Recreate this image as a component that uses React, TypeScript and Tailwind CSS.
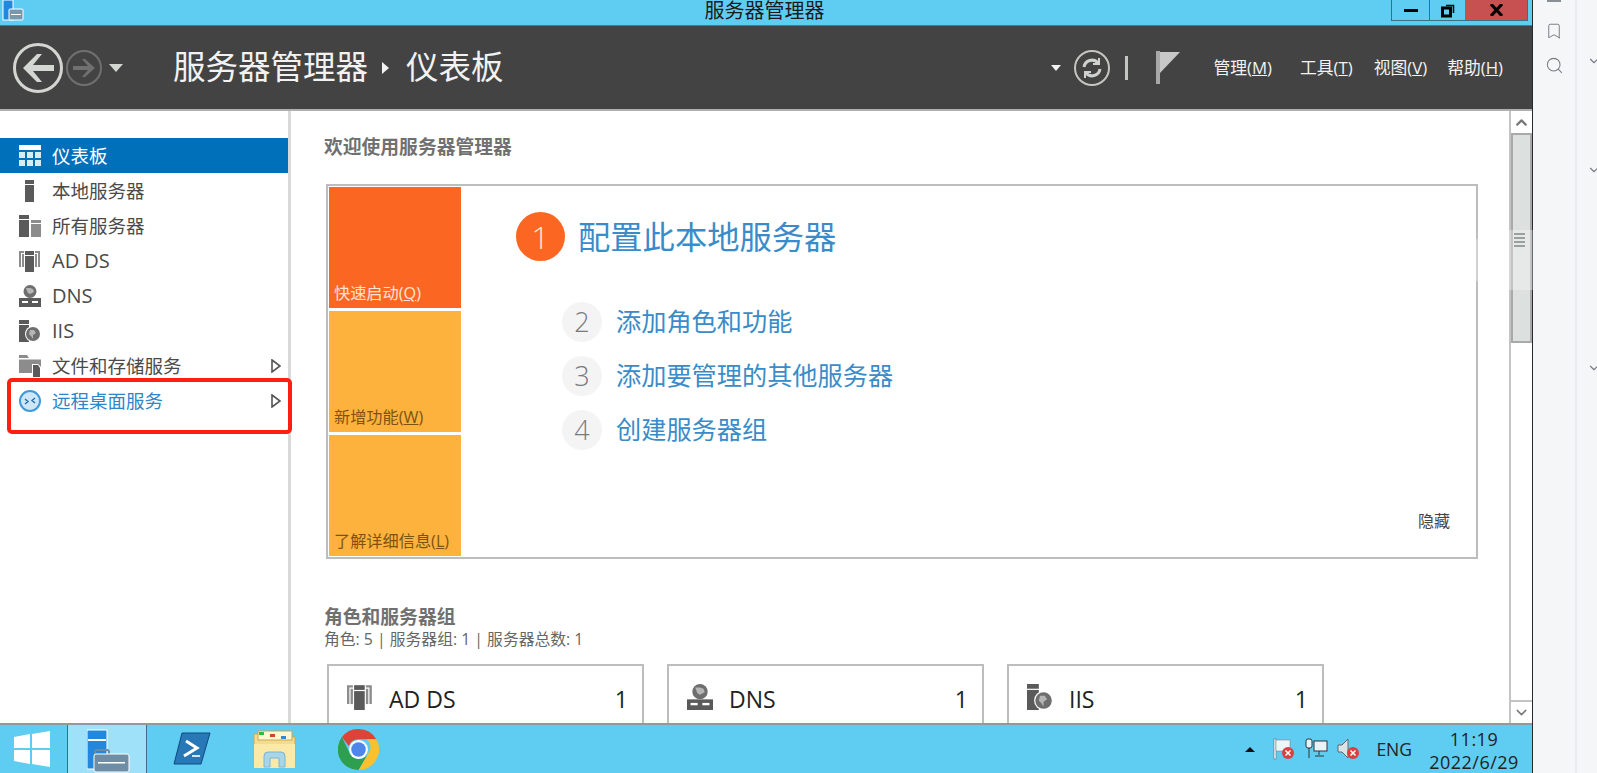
import React from "react";
import { Bookmark, ChevronDown, ChevronUp, Search, Settings } from "lucide-react";

const FONT = { fontFamily: '"Open Sans", "Noto Sans CJK SC", sans-serif' };

const DashIcon = () => (
  <svg width="22" height="22" viewBox="0 0 22 22" fill="#d6ecf8">
    <rect x="0" y="0" width="22" height="5" fill="#fff" />
    <rect x="0" y="7" width="6" height="6" />
    <rect x="8" y="7" width="6" height="6" />
    <rect x="16" y="7" width="6" height="6" />
    <rect x="0" y="15" width="6" height="6" />
    <rect x="8" y="15" width="6" height="6" />
    <rect x="16" y="15" width="6" height="6" />
  </svg>
);

const LocalIcon = () => (
  <svg width="22" height="22" viewBox="0 0 22 22" fill="#5a5a5a">
    <rect x="6" y="0" width="9" height="4" />
    <rect x="6" y="5" width="9" height="17" />
  </svg>
);

const AllIcon = () => (
  <svg width="22" height="22" viewBox="0 0 22 22">
    <rect x="0" y="0" width="10" height="4" fill="#5a5a5a" />
    <rect x="0" y="5" width="10" height="17" fill="#5a5a5a" />
    <rect x="12" y="5" width="10" height="3" fill="#8c8c8c" />
    <rect x="12" y="9" width="10" height="13" fill="#8c8c8c" />
  </svg>
);

const AdIcon = ({ size = 22 }: { size?: number }) => (
  <svg width={size} height={size} viewBox="0 0 22 22">
    <path d="M0 1h5v2H2v14H0zM21 1h-5v2h3v14h2z" fill="#8c8c8c" />
    <rect x="6" y="1" width="9" height="4" fill="#5a5a5a" />
    <rect x="6" y="6" width="9" height="16" fill="#5a5a5a" />
    <rect x="3" y="4" width="2" height="13" fill="#8c8c8c" />
    <rect x="16" y="4" width="2" height="13" fill="#8c8c8c" />
  </svg>
);

const DnsIcon = ({ size = 22 }: { size?: number }) => (
  <svg width={size} height={size} viewBox="0 0 22 22">
    <circle cx="11" cy="6.5" r="6.5" fill="#6e6e6e" />
    <path d="M7 3l4 0 3 1 1 3-4 2-2-1-1-2z" fill="#b5b5b5" />
    <rect x="0" y="13" width="22" height="9" fill="#5a5a5a" />
    <rect x="3" y="16" width="6" height="2" fill="#fff" />
    <rect x="13" y="16" width="6" height="2" fill="#fff" />
  </svg>
);

const IisIcon = ({ size = 22 }: { size?: number }) => (
  <svg width={size} height={size} viewBox="0 0 22 22">
    <rect x="0" y="0" width="10" height="4" fill="#5a5a5a" />
    <rect x="0" y="5" width="10" height="17" fill="#5a5a5a" />
    <circle cx="14" cy="14" r="8" fill="#fff" />
    <circle cx="14" cy="14" r="7" fill="#6e6e6e" />
    <path d="M11 10l4 0 2 3-3 2 0 4-2-3-2-2z" fill="#b5b5b5" />
  </svg>
);

const FilesIcon = () => (
  <svg width="22" height="22" viewBox="0 0 22 22">
    <path d="M0 0h8l2 3h12v15H0z" fill="#8c8c8c" />
    <rect x="0" y="3" width="22" height="1.5" fill="#fff" />
    <path d="M13 9h6l3 3v10h-9z" fill="#fff" />
    <path d="M14 10h5l2 3v9h-7z" fill="#5a5a5a" />
  </svg>
);

const RdsIcon = () => (
  <svg width="22" height="22" viewBox="0 0 22 22" fill="none">
    <circle cx="11" cy="11" r="10" fill="#cfe6f7" stroke="#3f9ad9" strokeWidth="2" />
    <path d="M6 9l3 2.5L6 14M16 8l-3 2.5 3 2.5" stroke="#1d6fb2" strokeWidth="1.4" />
  </svg>
);

const navItems: { label: string; icon: React.ReactNode; arrow?: boolean; latin?: boolean }[] = [
  { label: "本地服务器", icon: <LocalIcon /> },
  { label: "所有服务器", icon: <AllIcon /> },
  { label: "AD DS", icon: <AdIcon />, latin: true },
  { label: "DNS", icon: <DnsIcon />, latin: true },
  { label: "IIS", icon: <IisIcon />, latin: true },
  { label: "文件和存储服务", icon: <FilesIcon />, arrow: true },
];

const Arrow = () => (
  <svg width="10" height="14" viewBox="0 0 10 14" fill="#fff" stroke="#555" strokeWidth="1.6">
    <path d="M1 1l8 6-8 6z" />
  </svg>
);

const Sidebar = () => (
  <div className="relative w-[291px] shrink-0 border-r-[3px] border-[#d9d9d9] pt-[27px] text-[18.5px] text-[#4a4a4a]">
    <div className="flex h-[35px] items-center bg-[#0070bb] pl-[19px] text-white">
      <DashIcon />
      <span className="ml-[11px]">仪表板</span>
    </div>
    {navItems.map((item) => (
      <div key={item.label} className="flex h-[35px] items-center pl-[19px]">
        {item.icon}
        <span className={item.latin ? "ml-[11px] text-[20px]" : "ml-[11px]"}>{item.label}</span>
        {item.arrow && (
          <span className="ml-auto mr-[7px] flex">
            <Arrow />
          </span>
        )}
      </div>
    ))}
    <div className="flex h-[35px] items-center pl-[19px] text-[#2c86c9]">
      <RdsIcon />
      <span className="ml-[11px]">远程桌面服务</span>
      <span className="ml-auto mr-[7px] flex">
        <Arrow />
      </span>
    </div>
    <div className="absolute left-[7px] top-[267px] h-[56px] w-[285px] rounded-[5px] border-[4px] border-[#ff1f10]" />
  </div>
);

const Tile = ({ children, first }: { children: React.ReactNode; first?: boolean }) => (
  <div
    className={
      first
        ? "flex h-[121px] items-end bg-[#fb6723] pb-[3px] pl-[5px] text-[16.2px] text-[#fde3d3]"
        : "flex h-[121px] items-end bg-[#feb23e] pb-[3px] pl-[5px] text-[16.2px] text-[#7d5210]"
    }
  >
    <span>{children}</span>
  </div>
);

const Step = ({ n, label }: { n: number; label: string }) => (
  <div className="flex h-[40px] items-center">
    <div className="flex h-[40px] w-[40px] items-center justify-center rounded-full bg-[#f4f4f4] text-[27px] font-light text-[#7a7a7a]">
      {n}
    </div>
    <span className="ml-[14px] text-[25.2px] text-[#3a8cc9]">{label}</span>
  </div>
);

const Card = ({ icon, label }: { icon: React.ReactNode; label: string }) => (
  <div className="flex h-[120px] w-[317px] items-start border-2 border-[#bdbdbd] pl-[18px] pr-[14px] pt-[18px]">
    {icon}
    <span className="ml-[16px] mt-[2px] text-[23px] leading-[26px] text-[#222]">{label}</span>
    <span className="ml-auto mt-[2px] text-[23px] leading-[26px] text-[#222]">1</span>
  </div>
);

const Scrollbar = () => (
  <div className="flex w-[23px] shrink-0 flex-col border-l-2 border-[#c4c4c4] bg-white">
    <div className="flex h-[22px] items-center justify-center text-[#777]">
      <ChevronUp size={17} strokeWidth={3} />
    </div>
    <div className="h-[210px] border-2 border-[#a9a9a9] bg-[#dce0de]" />
    <div className="flex-1" />
    <div className="flex h-[23px] items-center justify-center border-t-2 border-[#c4c4c4] text-[#777]">
      <ChevronDown size={17} />
    </div>
  </div>
);

const Header = () => (
  <div className="flex h-[85px] shrink-0 items-center border-b-2 border-[#b0b0b0] bg-[#434343] text-[#f2f2f2]">
    <div className="ml-[13px] flex h-[50px] w-[50px] items-center justify-center rounded-full border-[3px] border-[#d4d6d2]">
      <svg width="34" height="30" viewBox="0 0 34 30" fill="#d4d6d2">
        <path d="M16 1l5 0-9 11h21v6H12l9 11h-5L2 15z" />
      </svg>
    </div>
    <div className="ml-[3px] flex h-[36px] w-[36px] items-center justify-center rounded-full border-2 border-[#707070]">
      <svg width="24" height="20" viewBox="0 0 24 20" fill="#707070">
        <path d="M13 1h-3l6 7H1v4h15l-6 7h3l10-9z" />
      </svg>
    </div>
    <div className="ml-[7px] h-0 w-0 border-x-[7px] border-t-[8px] border-x-transparent border-t-[#d4d6d2]" />
    <div className="ml-[50px] text-[32.5px] leading-none">服务器管理器</div>
    <div className="ml-[14px] h-0 w-0 border-y-[6px] border-l-[7px] border-y-transparent border-l-[#f2f2f2]" />
    <div className="ml-[17px] text-[32.5px] leading-none">仪表板</div>
    <div className="ml-auto h-0 w-0 border-x-[5px] border-t-[6px] border-x-transparent border-t-[#f2f2f2]" />
    <div className="ml-[13px] flex h-[36px] w-[36px] items-center justify-center rounded-full border-2 border-[#c4c6c2]">
      <svg width="24" height="24" viewBox="0 0 24 24" fill="none" stroke="#d0d2ce" strokeWidth="3">
        <path d="M4 11a8 8 0 0 1 14-4M20 13a8 8 0 0 1-14 4" />
        <path d="M19 2v6h-6M5 22v-6h6" strokeWidth="2" />
      </svg>
    </div>
    <div className="ml-[15px] h-[24px] w-[3px] bg-[#c4c6c2]" />
    <svg className="ml-[28px]" width="24" height="33" viewBox="0 0 24 33">
      <rect x="0" y="0" width="4" height="33" fill="#a8a8a8" />
      <path d="M4 1h20L4 22z" fill="#c8c8c8" />
    </svg>
    <div className="ml-[33px] flex text-[16.8px]">
      <span>
        管理(<u>M</u>)
      </span>
      <span className="ml-[28px]">
        工具(<u>T</u>)
      </span>
      <span className="ml-[21px]">
        视图(<u>V</u>)
      </span>
      <span className="ml-[20px]">
        帮助(<u>H</u>)
      </span>
    </div>
    <div className="w-[29px]" />
  </div>
);

const TitleBar = () => (
  <div className="relative flex h-[26px] shrink-0 items-start border-b border-[#3c7f99] bg-[#5fcdf2]">
    <svg className="ml-[1px]" width="23" height="21" viewBox="0 0 23 21">
      <rect x="2" y="0" width="10" height="20" fill="#2288dd" stroke="#fff" />
      <rect x="8" y="9" width="14" height="11" rx="1" fill="#7a98ad" stroke="#fff" />
      <rect x="10" y="14" width="10" height="1" fill="#fff" />
    </svg>
    <div className="flex-1 pl-[114px] text-center text-[20px] leading-[21px] text-[#1a1a1a]">服务器管理器</div>
    <div className="mr-[4px] flex h-[21px] border-x border-b border-[#3c6f85]">
      <div className="flex w-[38px] items-center justify-center border-r border-[#3c6f85]">
        <div className="h-[3px] w-[14px] bg-black" />
      </div>
      <div className="flex w-[35px] items-center justify-center">
        <svg width="14" height="15" viewBox="0 0 14 15" fill="none" stroke="#000">
          <rect x="1.5" y="5" width="8" height="8" strokeWidth="3" />
          <path d="M5 2.5h7.5V10" strokeWidth="1.5" />
        </svg>
      </div>
      <div className="flex w-[62px] items-center justify-center bg-[#c75050]">
        <svg width="13" height="12" viewBox="0 0 13 12" stroke="#000" strokeWidth="3" fill="none">
          <path d="M1 0l11 12M12 0L1 12" />
        </svg>
      </div>
    </div>
  </div>
);

const Taskbar = () => (
  <div className="flex h-[50px] shrink-0 items-center border-t-2 border-[#8f9a9f] bg-[#5fcdf2]">
    <svg className="ml-[14px]" width="36" height="36" viewBox="0 0 36 36" fill="#fff">
      <path d="M0 6l16-3v14H0zM18 3l18-3v17H18zM0 19h16v14L0 30zM18 19h18v17l-18-3z" />
    </svg>
    <div className="ml-[17px] flex h-full w-[80px] items-end justify-center border-x border-[#3a6e85] bg-[#9ee1f8] pl-[4px]">
      <svg width="44" height="44" viewBox="0 0 44 44">
        <rect x="0" y="1" width="20" height="39" fill="#2288dd" stroke="#fff" />
        <rect x="1" y="10" width="18" height="2" fill="#fff" />
        <rect x="8" y="21" width="14" height="6" rx="2" fill="none" stroke="#6a8ba0" strokeWidth="2" />
        <rect x="7" y="25" width="35" height="18" rx="2" fill="#6f8ea5" stroke="#fff" />
        <rect x="11" y="33" width="27" height="1.5" fill="#fff" />
      </svg>
    </div>
    <svg className="ml-[26px]" width="38" height="34" viewBox="0 0 38 34">
      <path d="M9 1h28L28 32H1z" fill="#2878b8" stroke="#0e4a7c" />
      <path d="M13 9l11 7-13 8" fill="none" stroke="#fff" strokeWidth="3" />
      <rect x="19" y="23" width="8" height="2" fill="#d5e7f5" />
    </svg>
    <svg className="ml-[42px]" width="44" height="40" viewBox="0 0 44 40">
      <path d="M1 5h18l3 3h20v29H1z" fill="#f3dc8e" stroke="#c8a853" />
      <rect x="5" y="2" width="34" height="9" fill="#fff6d2" stroke="#c8a853" />
      <rect x="6" y="3" width="5" height="3" fill="#25c13f" />
      <rect x="17" y="5" width="5" height="3" fill="#d9402a" />
      <rect x="28" y="7" width="5" height="3" fill="#2a8be0" />
      <path d="M1 15h41v24H1z" fill="#fbe9a8" />
      <path d="M11 38V27a4 4 0 0 1 4-4h13a4 4 0 0 1 4 4v11h-6v-9h-9v9z" fill="#a7d5ea" stroke="#7bb6d2" />
    </svg>
    <svg className="ml-[41px]" width="41" height="41" viewBox="0 0 48 48">
      <path d="M24 0a24 24 0 0 1 20.8 12H24a12 12 0 0 0-11.4 8L4.6 9.5A24 24 0 0 1 24 0z" fill="#db4437" />
      <path d="M44.8 12A24 24 0 0 1 24 48l10.4-18a12 12 0 0 0-.8-18z" fill="#fbc02d" />
      <path d="M24 48A24 24 0 0 1 4.6 9.5L14.6 30A12 12 0 0 0 34.4 30z" fill="#2e9e4f" />
      <circle cx="24" cy="24" r="11" fill="#fff" />
      <circle cx="24" cy="24" r="8.5" fill="#4e86ec" />
    </svg>
    <div className="ml-auto h-0 w-0 border-x-[5px] border-b-[5px] border-x-transparent border-b-[#111]" />
    <svg className="ml-[18px]" width="22" height="22" viewBox="0 0 22 22">
      <rect x="1" y="1" width="2" height="20" fill="#fff" stroke="#555" strokeWidth="0.5" />
      <path d="M3 2h14v11H3z" fill="#ecf5f8" stroke="#777" strokeWidth="0.5" />
      <circle cx="15" cy="15" r="6" fill="#d94040" />
      <path d="M12.5 12.5l5 5m0-5l-5 5" stroke="#fff" strokeWidth="1.5" />
    </svg>
    <svg className="ml-[10px]" width="23" height="22" viewBox="0 0 23 22" fill="none" stroke="#333">
      <rect x="1" y="1" width="6" height="9" rx="2" fill="#e6f4f8" />
      <rect x="9" y="3" width="13" height="10" fill="#e6f4f8" />
      <path d="M4 10v10M14 13v4M10 18h9" />
    </svg>
    <svg className="ml-[9px]" width="23" height="22" viewBox="0 0 23 22">
      <path d="M1 7h4l6-6v19l-6-6H1z" fill="#d9e4e8" stroke="#666" />
      <circle cx="16" cy="15" r="6" fill="#d94040" />
      <path d="M13.5 12.5l5 5m0-5l-5 5" stroke="#fff" strokeWidth="1.5" />
    </svg>
    <div className="ml-[16px] text-[17.5px] text-[#222]">ENG</div>
    <div className="ml-[12px] mr-[8px] w-[100px] pt-[3px] text-center text-[18px] leading-[23px] tracking-[0.5px] text-[#222]">
      <div>11:19</div>
      <div>2022/6/29</div>
    </div>
  </div>
);

const SidePanel = () => (
  <div className="flex flex-1 overflow-hidden bg-[#f5f6f8] text-[#777c85]">
    <div className="flex w-[44px] shrink-0 flex-col items-center border-r-2 border-[#e9ebef]">
      <div className="h-[2px] w-[14px] bg-[#8a8f96]" />
      <Bookmark className="mt-[20px]" size={18} strokeWidth={1.3} />
      <Search className="mt-[16px]" size={19} strokeWidth={1.3} />
    </div>
    <div className="flex flex-col pl-[10px] pt-[54px]">
      <ChevronDown size={14} />
      <ChevronDown className="mt-[95px]" size={14} />
      <ChevronDown className="mt-[184px]" size={14} />
    </div>
  </div>
);

export default function App() {
  return (
    <div className="relative flex h-[773px] w-[1597px] overflow-hidden bg-white" style={FONT}>
      <div className="flex w-[1533px] shrink-0 flex-col border-r border-[#2a2a2a]">
        <TitleBar />
        <Header />
        <div className="flex min-h-0 flex-1">
          <Sidebar />
          <div className="min-w-0 flex-1 overflow-hidden pl-[33px] pt-[26px]">
            <div className="text-[18.8px] font-bold leading-[20px] text-[#707070]">欢迎使用服务器管理器</div>
            <div className="ml-[2px] mt-[27px] flex h-[375px] w-[1152px] border-2 border-[#bdbdbd] p-px">
              <div className="flex w-[132px] shrink-0 flex-col gap-[3px]">
                <Tile first>
                  快速启动(<u>Q</u>)
                </Tile>
                <Tile>
                  新增功能(<u>W</u>)
                </Tile>
                <Tile>
                  了解详细信息(<u>L</u>)
                </Tile>
              </div>
              <div className="flex min-w-0 flex-1 flex-col pl-[55px] pt-[25px]">
                <div className="flex h-[49px] items-center">
                  <div className="flex h-[49px] w-[49px] items-center justify-center rounded-full bg-[#fb6723] text-[32px] font-light text-[#fde3d3]">
                    1
                  </div>
                  <span className="ml-[13px] text-[32.3px] text-[#3a8cc9]">配置此本地服务器</span>
                </div>
                <div className="ml-[46px] mt-[41px] flex flex-col gap-[14px]">
                  <Step n={2} label="添加角色和功能" />
                  <Step n={3} label="添加要管理的其他服务器" />
                  <Step n={4} label="创建服务器组" />
                </div>
                <div className="mb-[23px] mr-[25px] mt-auto self-end text-[16px] text-[#444]">隐藏</div>
              </div>
            </div>
            <div className="mt-[47px] text-[18.8px] font-bold leading-[22px] text-[#707070]">角色和服务器组</div>
            <div className="mt-px text-[15.8px] leading-[20px] text-[#666]">角色: 5 | 服务器组: 1 | 服务器总数: 1</div>
            <div className="ml-[3px] mt-[15px] flex gap-[23px]">
              <Card icon={<AdIcon size={26} />} label="AD DS" />
              <Card icon={<DnsIcon size={26} />} label="DNS" />
              <Card icon={<IisIcon size={26} />} label="IIS" />
            </div>
          </div>
          <Scrollbar />
        </div>
        <Taskbar />
      </div>
      <SidePanel />
      {/* floating settings handle lying over the scrollbar */}
      <div className="absolute left-[1468px] top-[230px] flex h-[60px] w-[65px] items-center rounded-l-full bg-white/30 pl-[22px] text-white/80">
        <Settings size={20} />
      </div>
      <div className="absolute left-[1514px] top-[233px] flex w-[11px] flex-col gap-[2px]">
        <div className="h-[2px] bg-[#9aa09d]" />
        <div className="h-[2px] bg-[#9aa09d]" />
        <div className="h-[2px] bg-[#9aa09d]" />
        <div className="h-[2px] bg-[#9aa09d]" />
      </div>
    </div>
  );
}
